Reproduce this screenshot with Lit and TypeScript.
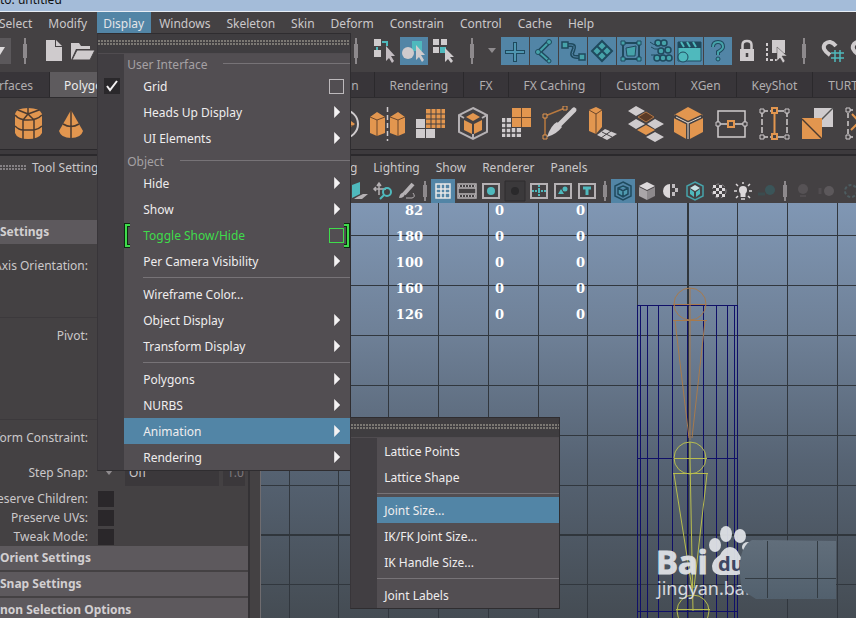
import { LitElement, html, svg, css, nothing } from "lit";
import { customElement, property } from "lit/decorators.js";
import { classMap } from "lit/directives/class-map.js";

const O = "#e2964f";
const L = "#cfcbcd";
const T = "#4fb9bd";
const M = "#46a3aa";
const D = "#1f4a5e";

const icon = (w: number, h: number, body: unknown) =>
  html`<svg width=${w} height=${h} viewBox="0 0 ${w} ${h}" fill="none" aria-hidden="true">${body}</svg>`;

/* ---------- shelf glyphs, 36 x 36 ---------- */
const shelf: Record<string, unknown> = {
  cylinder: svg`<path d="M4 8Q5 2 17 2T31 8V27Q28 33 17 33T4 27Z" fill=${O}/>
    <path d="M4 9Q8 14 17 14T31 9M4 20Q8 24 12 24H23Q28 23 31 20M12 14V33M23 14V33M17 8L7 4M17 8L28 4M17 8L12 14M17 8L23 14M17 8V2" stroke="#4a3a30" stroke-width="1.5"/>`,
  cone: svg`<path d="M17 4L29 25Q27 32 17 32T5 25Z" fill=${O}/><path d="M17 4V32M9 18Q17 23 25 18" stroke="#4a3a30" stroke-width="1.5"/>`,
  sphere: svg`<circle cx="17" cy="18" r="14" stroke=${L} stroke-width="2"/><path d="M8 20L20 12L28 18L18 26Z" fill=${O}/><path d="M10 20H26" stroke="#4a3a30"/>`,
  mirror: svg`<path d="M0 11L7 6L15 11V27L7 30L0 27ZM20 11L28 6L35 11V27L28 30L20 27Z" fill=${O}/>
    <path d="M0 11L7 14L15 11M7 14V30M20 11L28 14L35 11M28 14V30" stroke="#6a472c"/><path d="M17.5 1V35" stroke=${L} stroke-width="1.5" stroke-dasharray="5 3"/>`,
  smooth: svg`<path d="M13 3H32V22H13Z" fill=${O}/><path d="M18 3V22M23 3V22M28 3V22M13 8H32M13 13H32M13 18H32" stroke="#444143" stroke-width="1"/>
    <path d="M3 13H12V22H3ZM3 23H12V32H3ZM13 23H22V32H13Z" fill=${L}/>`,
  hex: svg`<path d="M17 2L31 9V26L17 33L3 26V9ZM3 9L8 12M31 9L26 12M17 28V33" stroke="#b5b1b4" stroke-width="2"/>
    <path d="M17 7L24 11L17 15L10 11ZM8 14L16 18V28L8 24ZM26 14L18 18V28L26 24Z" fill=${O}/>`,
  reduce: svg`<path d="M13 2H32V21H13Z" fill=${O}/><path d="M22.500 2V21M13 11.500H32" stroke="#6a472c"/>
    <path d="M3 12H12V22H22V31H3Z" fill=${L}/><path d="M7 12V31M12 22V31M17 22V31M3 17H12M3 22H12M3 27H22" stroke="#444143" stroke-width="1.500"/>`,
  pen: svg`<path d="M3 31V10L23 2" stroke="#b9793f" stroke-width="1.500"/><path d="M1 8H5V12H1ZM21 0H25V4H21ZM1 29H5V33H1Z" fill="#444143" stroke=${O}/>
    <path d="M5 31Q9 19 15 16L20 21Q15 28 5 31Z" fill=${L}/><path d="M18 18L32 4" stroke=${L} stroke-width="5" stroke-linecap="round"/>`,
  extrude: svg`<path d="M4 4L11 1L17 4V21L11 28L4 25Z" fill=${O}/><path d="M4 4L11 8L17 4M11 8V28" stroke="#6a472c"/>
    <path d="M12 29L20 23L32 28L22 34Z" fill=${L}/><path d="M17 26L27 31M16 32L26 25" stroke="#444143"/>`,
  bridge: svg`<path d="M0 5L8 0L17 5L8 10ZM0 18L8 13L17 18L8 23ZM19 18L27 13L36 18L27 23ZM18 31L27 26L36 31L27 36Z" fill=${L}/>
    <path d="M10 11L18 6L26 11L18 16Z" fill="#5b3b26" stroke="#b07443"/><path d="M9 24L18 19L27 24L18 29Z" fill=${O}/>`,
  cube: svg`<path d="M17 1L32 9V26L17 34L3 26V9Z" fill=${O}/><path d="M3 10L17 17L32 10M17 17V34" stroke="#444143" stroke-width="4"/><path d="M5 11L17 17L30 11M17 17V33" stroke="#e8dccf"/>`,
  loop: svg`<path d="M4 5H31V31H4ZM4 18H31" stroke=${L} stroke-width="1.500"/><path d="M2 16H6V20H2ZM29 16H33V20H29Z" fill="#444143" stroke=${L}/><path d="M14 15H20V21H14Z" fill="#444143" stroke=${O} stroke-width="2"/>`,
  lattice: svg`<path d="M5 5H30M5 31H30M5 5V31M30 5V31" stroke=${L} stroke-width="1.500" stroke-dasharray="6 2"/>
    <path d="M3 3H7V7H3ZM28 3H32V7H28ZM3 29H7V33H3ZM28 29H32V33H28Z" fill="#444143" stroke=${L}/><path d="M17.500 5V31" stroke=${O} stroke-width="2"/><path d="M15 2H20V7H15ZM15 28H20V33H15Z" fill="#444143" stroke=${O} stroke-width="2"/>`,
  flip: svg`<path d="M14 2H33V21H14Z" fill=${L}/><path d="M33 2L14 21" stroke="#555" stroke-width="1.500"/><path d="M2 12H22V33H2Z" fill=${O}/><path d="M2 13L22 33" stroke="#4a3a30" stroke-width="1.500"/>`,
  corner: svg`<path d="M5 4H30V31H5Z" stroke=${L} stroke-width="1.500" stroke-dasharray="5 3"/><path d="M3 2H7V6H3ZM3 29H7V33H3Z" fill="#444143" stroke=${L}/><path d="M9 8L30 30M8 24L16 16" stroke=${O} stroke-width="2"/>`,
};

/* ---------- status line glyphs, 28 x 28 ---------- */
const status: Record<string, unknown> = {
  page: svg`<path d="M6 3H15V10H22V24H6Z" fill=${L}/><path d="M16 3L22 9H16Z" fill=${L}/>`,
  folder: svg`<path d="M2 23V6H10L12 9H21V12H7Z" fill=${L}/><path d="M8 13H26L21 23H3Z" fill=${L} stroke="#444143"/>`,
  hierarchy: svg`<path d="M4 2H11V9H4ZM4 13H11V20H4Z" fill=${L}/><path d="M7 10V13M12 5H17V9" stroke=${T} stroke-width="2"/><path d="M16 9V24L19 21L22 26L24 24L21 19H25Z" fill="#c3bcc1"/>`,
  object: svg`<path d="M12 4H22V14H12Z" fill=${T}/><circle cx="8" cy="16" r="6" fill=${L}/><path d="M16 8V23L19 20L22 25L24 23L21 18H25Z" fill=${L}/>`,
  component: svg`<path d="M3 2H9V8H3ZM11 2H17V8H11ZM3 10H9V16H3Z" fill=${L}/><path d="M10 10H16V16H10Z" fill=${T}/><path d="M15 11V25L18 22L21 26L23 24L20 20H24Z" fill=${L}/>`,
  plus: svg`<path d="M14 5V25M4 15H24" stroke=${D} stroke-width="4"/><path d="M14 6V24M5 15H23" stroke="#4f96b0" stroke-width="2"/>`,
  joint: svg`<path d="M18 6L9 15L18 23" stroke=${D} stroke-width="5"/><path d="M18 6L9 15L18 23" stroke=${M} stroke-width="2"/><circle cx="19" cy="5" r="2.500" fill=${M} stroke=${D}/><circle cx="8" cy="15" r="2.500" fill=${M} stroke=${D}/><circle cx="19" cy="24" r="2" fill=${M} stroke=${D}/>`,
  curve: svg`<path d="M8 8H12Q17 8 14 14T18 20H22" stroke=${D} stroke-width="4"/><path d="M8 8H12Q17 8 14 14T18 20H22" stroke="#5285a6" stroke-width="1"/><path d="M3 5H9V11H3ZM20 17H26V23H20Z" fill=${M} stroke=${D} stroke-width="1.500"/>`,
  surface: svg`<path d="M14 4L24 14L14 24L4 14ZM9 9L19 19M19 9L9 19" fill=${M} stroke=${D} stroke-width="2"/>`,
  deform: svg`<path d="M6 6H22V22H6Z" stroke=${D} stroke-width="2"/><path d="M9 11L19 9L18 19H10Z" fill=${M} stroke=${D}/><path d="M4 4H8V8H4ZM20 4H24V8H20ZM4 20H8V24H4ZM20 20H24V24H20Z" fill=${M} stroke=${D}/>`,
  dynamics: svg`${[[12,6],[18,6],[22,13],[15,14],[17,21],[11,21],[23,21]].map(([x, y]) => svg`<circle cx=${x} cy=${y} r="3" fill=${M} stroke=${D} stroke-width="1.500"/>`)}<path d="M4 5Q7 8 11 8M5 10Q9 13 12 12M5 18H9" stroke=${D}/>`,
  render: svg`<path d="M3 5H26V24H3Z" fill=${T} stroke=${D}/><path d="M3 5H26V11H3Z" fill=${D}/><path d="M6 5L9 10M12 5L15 10M18 5L21 10" stroke=${T} stroke-width="2"/><circle cx="8" cy="20" r="5" fill=${T} stroke=${D}/>`,
  help: svg`<path d="M9 10Q9 5 14 5T19 10Q19 12 14 15V18" stroke=${D} stroke-width="4"/><path d="M9 10Q9 5 14 5T19 10Q19 12 14 15V18" stroke=${M} stroke-width="2"/><circle cx="14" cy="22" r="2" fill=${M} stroke=${D}/>`,
  lock: svg`<path d="M7 12H21V24H7Z" fill=${L}/><path d="M9.500 12V8Q9.500 4 14 4T18.500 8V12" stroke=${L} stroke-width="2.500"/><path d="M14 16V20" stroke="#444143" stroke-width="2.500"/>`,
  marquee: svg`<path d="M4 6V23H14" stroke=${L} stroke-width="2" stroke-dasharray="3 2"/><path d="M9 3H22V16H9Z" fill=${L}/><path d="M14 10V24L17 21L20 26L22 24L19 19H24Z" fill=${L} stroke="#444143" stroke-width=".5"/>`,
  magnet: svg`<path d="M11 18Q2 12 6 7Q11 2 17 9" stroke=${L} stroke-width="4"/><path d="M16 13V25M21 13V25M12 16H25M12 21H25" stroke=${T} stroke-width="1.500"/>`,
};

/* ---------- viewport glyphs, 22 x 22 ---------- */
const P = "#b5b1b4";
const view: Record<string, unknown> = {
  plane: svg`<path d="M4 5L12 2V14L4 18Z" fill=${T}/><path d="M9 17L15 14H20L14 19H6Z" fill=${P}/>`,
  move: svg`<path d="M7 4V15M2 9H14M5 6L7 3L9 6M4 7L2 9L4 11" stroke=${P} stroke-width="1.500"/><circle cx="15" cy="12" r="4" stroke=${T} stroke-width="2"/><path d="M12 15L8 19" stroke=${T} stroke-width="2"/>`,
  brush: svg`<path d="M8 14L17 4" stroke=${P} stroke-width="4"/><path d="M3 18Q4 12 9 13Q9 18 3 18Z" fill=${P}/><path d="M10 18H16Q20 17 17 13" stroke=${P}/>`,
  grid: svg`<path d="M4 4H18V18H4ZM9 4V18M13 4V18M4 9H18M4 13H18" stroke="#e8e8e8" stroke-width="1.500"/>`,
  film: svg`<path d="M2 4H20V18H2ZM2 8H20M2 14H20" stroke=${P} stroke-width="1.500"/><path d="M3 6H20M3 16H20" stroke=${P} stroke-width="2" stroke-dasharray="1 2"/>`,
  gate: svg`<path d="M3 4H19V18H3Z" stroke=${P} stroke-width="2"/><circle cx="11" cy="11" r="4" fill=${T}/>`,
  off: svg`<path d="M1 1H21V21H1Z" fill="#3b393b" stroke="#2f2d2f"/><circle cx="11" cy="11" r="4" fill="#2a292b"/>`,
  cross: svg`<path d="M3 4H19V18H3Z" stroke=${P} stroke-width="2"/><path d="M11 5V17M4 11H18" stroke=${T} stroke-width="2" stroke-dasharray="2 1"/>`,
  safe: svg`<path d="M3 4H19V18H3Z" stroke=${P} stroke-width="2"/><circle cx="13" cy="9" r="2.500" fill=${T}/><path d="M6 14L9 9L12 14Z" fill=${T}/>`,
  title: svg`<path d="M3 4H19V18H3Z" stroke=${P} stroke-width="2"/><path d="M7 8H15M11 8V15" stroke=${T} stroke-width="3"/>`,
  wire: svg`<path d="M11 2L19 6V16L11 20L3 16V6Z" stroke=${D} stroke-width="1.500"/><path d="M11 6L16 8V14L11 17L6 14V8ZM6 8L11 11L16 8M11 11V17" fill="#4f9ab0" stroke=${D} stroke-width="1.500"/>`,
  shaded: svg`<path d="M11 2L19 6L11 10L3 6Z" fill="#dcd8da"/><path d="M3 7L11 11V20L3 16Z" fill="#aaa6a9"/><path d="M19 7L11 11V20L19 16Z" fill="#8d898c"/>`,
  half: svg`<path d="M10 4V18A7 7 0 0 1 10 4" fill="#dcd8da"/><path d="M12 4H15V8H12ZM15 8H18V12H15ZM12 12H15V16H12Z" fill="#c0bcbf"/>`,
  textured: svg`<path d="M11 2L19 6V16L11 20L3 16V6Z" stroke=${M} stroke-width="1.500"/><path d="M11 5L16 8L11 11L6 8Z" fill="#c8e4e6"/><path d="M6 9L10 12V17L6 14ZM16 9L12 12V17L16 14Z" fill=${T}/>`,
  checker: svg`<circle cx="11" cy="11" r="7" stroke="#8b878a" stroke-dasharray="3 3"/><path d="M5 5H8V8H5ZM11 5H14V8H11ZM8 8H11V11H8ZM14 8H17V11H14ZM5 11H8V14H5ZM11 11H14V14H11ZM8 14H11V17H8ZM14 14H17V17H14Z" fill="#dcd8da"/>`,
  light: svg`<circle cx="11" cy="10" r="4" fill="#dcd8da"/><path d="M11 13V17" stroke="#dcd8da" stroke-width="5"/><path d="M11 2V4M2 11H5M17 11H20M4 4L6 6M18 4L16 6M4 18L6 16M18 18L16 16M9 19H13" stroke="#dcd8da" stroke-width="1.500"/>`,
  shadow: svg`<circle cx="14" cy="10" r="5" fill="#3b5559"/><path d="M2 14H9" stroke="#3b4c4f" stroke-width="3"/>`,
  dim: svg`<circle cx="11" cy="9" r="5" fill="#565255"/><path d="M8 16H14" stroke="#504c4f" stroke-width="2"/>`,
  blur: svg`<circle cx="13" cy="11" r="5" fill="#5c585b"/><path d="M4 8V14" stroke="#514d50" stroke-width="3"/>`,
  ring: svg`<circle cx="11" cy="11" r="6" stroke="#4d5c60" stroke-width="2" stroke-dasharray="3 2"/>`,
};

interface Entry {
  label?: string;
  kind?: "head" | "line";
  arrow?: boolean;
  box?: boolean;
  checked?: boolean;
  recent?: boolean;
  active?: boolean;
  sub?: Entry[];
}

const animation: Entry[] = [
  { label: "Lattice Points" },
  { label: "Lattice Shape" },
  { kind: "line" },
  { label: "Joint Size...", active: true },
  { label: "IK/FK Joint Size..." },
  { label: "IK Handle Size..." },
  { kind: "line" },
  { label: "Joint Labels" },
];

const display: Entry[] = [
  { kind: "head", label: "User Interface" },
  { label: "Grid", box: true, checked: true },
  { label: "Heads Up Display", arrow: true },
  { label: "UI Elements", arrow: true },
  { kind: "head", label: "Object" },
  { label: "Hide", arrow: true },
  { label: "Show", arrow: true },
  { label: "Toggle Show/Hide", box: true, recent: true },
  { label: "Per Camera Visibility", arrow: true },
  { kind: "line" },
  { label: "Wireframe Color..." },
  { label: "Object Display", arrow: true },
  { label: "Transform Display", arrow: true },
  { kind: "line" },
  { label: "Polygons", arrow: true },
  { label: "NURBS", arrow: true },
  { label: "Animation", arrow: true, active: true, sub: animation },
  { label: "Rendering", arrow: true },
];

const reset = css`
  * { box-sizing: border-box; }
  button, input, select {
    font: inherit;
    color: inherit;
    background: none;
    border: 0;
    padding: 0;
    margin: 0;
    appearance: none;
    border-radius: 0;
  }
  ul { list-style: none; margin: 0; padding: 0; }
  svg { display: block; flex: none; }
`;

@customElement("drop-menu")
export class DropMenu extends LitElement {
  @property({ attribute: false }) entries: Entry[] = [];
  @property({ type: Boolean, reflect: true }) nested = false;

  static styles = [reset, css`
    :host { display: block; font-size: 12px; line-height: 18px; color: #efedee; white-space: nowrap; }
    .menu {
      border: 1px solid #2f2d30;
      border-left-color: #383539;
      background: linear-gradient(90deg, #413e42 26px, #524e52 26px);
    }
    .tear {
      height: 20px;
      padding-top: 6px;
      background: #3f3d40;
      border-bottom: 1px solid #504c50;
    }
    .dots { height: 6px; background: radial-gradient(circle at 1px 1px, #7b7873 1px, transparent 1px) 0 0 / 3px 3px; }
    .row { position: relative; display: grid; grid-template-columns: 26px 1fr; height: 26px; }
    .body { display: flex; align-items: center; padding: 0 9px 0 19px; }
    .active { background: #5285a6; }
    .item { flex: 1; text-align: left; padding-top: 2px; height: 26px; }
    .tick { width: 16px; height: 16px; margin: 5px 0 0 6px; background: #2a282b; display: grid; place-items: center; }
    .arrow { width: 6px; height: 12px; margin-right: 1px; background: #f4f2f3; clip-path: polygon(0 0, 100% 50%, 0 100%); }
    .box { width: 15px; height: 15px; border: 1px solid #bdb9bc; margin-right: -3px; margin-top: 1px; }
    .recent { color: #3fdc4b; }
    .recent .box { border-color: #3fdc4b; }
    .bracket { position: absolute; top: 1px; bottom: 0; width: 7px; }
    .open { left: 26px; }
    .close { right: 0; }
    .head { display: flex; align-items: center; height: 19px; padding-left: 29px; color: #a5a1a4; }
    .head span { padding-top: 2px; }
    .head::after { content: ""; flex: 1; margin-left: 16px; border-top: 1px solid #777377; }
    .line { height: 7px; padding: 3px 0 0 45px; }
    .line::after { content: ""; display: block; border-top: 1px solid #777377; }
    .hold { position: absolute; left: 100%; top: -1px; width: 210px; z-index: 3; }
    :host([nested]) .body { padding-left: 7px; }
    :host([nested]) .line { padding-left: 26px; }
  `];

  private bracket(open: boolean) {
    const d = open ? "M6 2H2V23H6" : "M1 2H5V23H1";
    return html`<svg class="bracket ${open ? "open" : "close"}" width="7" height="25" fill="none" aria-hidden="true">
      <path d=${d} stroke="#0c2b10" stroke-width="4"></path><path d=${d} stroke="#3fdc4b" stroke-width="2"></path></svg>`;
  }

  private entry(e: Entry) {
    if (e.kind === "line") return html`<li class="line" role="separator"></li>`;
    if (e.kind === "head") return html`<li class="head"><span>${e.label}</span></li>`;
    return html`<li class=${classMap({ row: true, recent: !!e.recent })}>
      <span>${e.checked
        ? html`<span class="tick">${icon(12, 12, svg`<path d="M1 6L4 10L11 1" stroke="#f4f2f3" stroke-width="2"/>`)}</span>`
        : nothing}</span>
      <div class=${classMap({ body: true, active: !!e.active })}>
        <button class="item" role="menuitem">${e.label}</button>
        ${e.arrow ? html`<span class="arrow"></span>` : nothing}
        ${e.box ? html`<button class="box" aria-label="${e.label} options"></button>` : nothing}
      </div>
      ${e.recent ? [this.bracket(true), this.bracket(false)] : nothing}
      ${e.sub ? html`<drop-menu class="hold" nested .entries=${e.sub}></drop-menu>` : nothing}
    </li>`;
  }

  render() {
    return html`<div class="menu">
      <div class="tear"><div class="dots"></div></div>
      <ul role="menu">${this.entries.map((e) => this.entry(e))}</ul>
    </div>`;
  }
}

const BLUE = "#101068";
const columns = [289, 338, 388, 438, 488, 538, 587, 637, 737, 787, 837];
const rows = [235, 285, 335, 385, 435, 485, 584];
const staves = [637, 640, 647, 658, 672, 687, 703, 716, 727, 734, 737];

@customElement("scene-view")
export class SceneView extends LitElement {
  static styles = [reset, css`
    :host {
      display: block;
      position: relative;
      overflow: hidden;
      background: linear-gradient(#8097b4, #6f8198 30%, #566373 62%, #444b52 100%);
    }
    .scene { position: absolute; inset: 0; width: 100%; height: 100%; }
    .hud {
      position: absolute;
      top: -5px;
      left: 126px;
      border-collapse: collapse;
      font: bold 13px/26px "DejaVu Serif", serif;
      color: #fff;
    }
    .hud td { padding: 0; height: 26px; text-align: right; width: 81px; }
    .hud td:first-child { width: 36px; }
    .mark { font-family: "Noto Sans", sans-serif; fill: #e3e6ea; }
    .big { font-size: 33px; font-weight: 700; stroke: #e3e6ea; stroke-width: 1px; }
    .small { font-size: 18px; fill: url(#fade); }
    .du { font-size: 20px; font-weight: 700; fill: #3f4764; }
  `];

  render() {
    return html`
      <svg class="scene" fill="none" aria-label="Perspective view">
        <defs>
          <linearGradient id="patch" x1="0" y1="0" x2="0" y2="1"><stop offset="0" stop-color="#616e7b"/><stop offset="1" stop-color="#52606d"/></linearGradient>
          <linearGradient id="fade" gradientUnits="userSpaceOnUse" x1="657" y1="0" x2="757" y2="0"><stop offset=".85" stop-color="#e3e6ea"/><stop offset="1" stop-color="#e3e6ea" stop-opacity="0"/></linearGradient>
        </defs>
        <g transform="translate(-261 -203)">
          <g stroke="#31373e" shape-rendering="crispEdges">
            ${columns.map((x) => svg`<path d="M${x + 0.5} 203V1600"/>`)}
            ${rows.map((y) => svg`<path d="M261 ${y + 0.5}H2600"/>`)}
            <path d="M261 535H2600M688 203V1600" stroke="#30363c" stroke-width="2"/>
          </g>
          <g stroke=${BLUE} shape-rendering="crispEdges">
            ${staves.map((x) => svg`<path d="M${x + 0.5} 305V1600"/>`)}
            <path d="M637 305.500H738M637 458.500H738M637 611.500H738"/>
          </g>
          <g stroke="#a87a4c">
            <circle cx="690" cy="304" r="16"/>
            <path d="M690 288V440M673 320.500H707M675 321L689 438M705 321L692 438M673 304.500H706"/>
          </g>
          <g stroke="#b9bd4e">
            <circle cx="690" cy="458" r="16"/>
            <path d="M674 458.500H707M690 442V458L693 611M673 473.500H708M674 474L692 588M707 474L694 588M676 609.500H710"/>
            <circle cx="693" cy="611" r="16"/>
          </g>
          <g class="mark" opacity=".92">
            <text class="big" x="656" y="574">Bai</text>
            <ellipse cx="715" cy="545" rx="6" ry="7"/><ellipse cx="726" cy="534" rx="6" ry="8"/>
            <ellipse cx="740" cy="536" rx="6" ry="7"/><ellipse cx="748" cy="547" rx="6" ry="5"/>
            <path d="M730 547Q736 547 739 554L745 564Q746 574 737 575H720Q712 574 712 566Q713 559 720 555Q724 547 730 547Z"/>
            <text class="du" x="718" y="571">du</text>
            <text class="small" x="657" y="595">jingyan.bai</text>
          </g>
          <path d="M752 540L836 541V599H756L742 590Q738 570 741 556Q744 544 752 540Z" fill="url(#patch)"/>
          <path d="M767.500 541V598M817.500 541V598M745 578.500H836" stroke="#333b42"/>
        </g>
      </svg>
      <table class="hud">
        ${["82", "180", "100", "160", "126"].map((n) => html`<tr><td>${n}</td><td>0</td><td>0</td></tr>`)}
      </table>`;
  }
}

@customElement("app-root")
export class AppRoot extends LitElement {
  static styles = [reset, css`
    :host {
      display: flex;
      flex-direction: column;
      min-height: 100vh;
      overflow: hidden;
      background: #444143;
      color: #cbc8ca;
      font: 12px/18px "Noto Sans", "Open Sans", sans-serif;
      white-space: nowrap;
    }
    .title { display: flex; align-items: flex-end; height: 12px; overflow: hidden; background: #a4bcd9; border-bottom: 1px solid #e8eef5; color: #111; font-size: 12px; line-height: 18px; padding-bottom: 2px; }
    .menus { position: relative; z-index: 5; display: flex; height: 22px; align-items: stretch; }
    .menus > .first { margin-left: -9px; }
    .top { padding: 2px 8px 0 8px; display: block; height: 22px; }
    .slot { position: relative; margin-left: 2px; }
    .slot .top { background: #5285a6; color: #e4e4e8; padding-left: 6px; width: 54px; }
    .drop { position: absolute; top: 100%; left: 0; width: 254px; margin-top: -1px; }
    .status { display: flex; align-items: center; height: 38px; padding-bottom: 5px; overflow: hidden; }
    .status button { width: 28px; height: 28px; flex: none; }
    .status .mode { width: 11px; height: 26px; background: #5b585b; display: grid; place-items: center; }
    .bar { flex: none; position: relative; width: 4px; height: 26px; background: linear-gradient(90deg, transparent 1px, #8d898c 1px, #8d898c 3px, transparent 3px); }
    .bar::after { content: ""; position: absolute; left: 0; top: 6px; width: 4px; height: 14px; background: #8d898c; }
    .on { background: #5285a6; }
    .mask { display: flex; gap: 1px; flex: none; }
    .caret { flex: none; width: 8px; height: 5px; background: #8f8b8e; clip-path: polygon(0 0, 100% 0, 50% 100%); }
    .space { flex: none; }
    .tabs { display: flex; height: 26px; background: #383539; border-bottom: 1px solid #2e2c2f; overflow: hidden; }
    .tabs button { flex: none; padding: 2px 15px 0; border-right: 1px solid #2b292c; color: #b1aeb0; }
    .tabs .cut { margin-left: -30px; padding-right: 16px; }
    .tabs .live { background: #5e5b5e; color: #ecebec; padding: 2px 11px 0 14px; }
    .shelf { display: flex; align-items: center; height: 51px; padding-left: 7px; overflow: hidden; }
    .shelf button { flex: none; width: 43px; height: 36px; display: grid; place-items: center; }
    .shelf .gap { margin-left: 15px; }
    .seam { height: 7px; border-top: 1px solid #2b292c; border-bottom: 2px solid #2b292c; background: #3d3a3d; }
    .main { flex: 1; display: flex; min-height: 0; }
    .side { width: 250px; flex: none; display: flex; flex-direction: column; border-right: 2px solid #343235; overflow: hidden; }
    .tool { display: flex; align-items: center; gap: 6px; height: 64px; padding: 0 0 40px; }
    .grip { width: 26px; height: 6px; background: radial-gradient(circle at 1px 1px, #858184 1px, transparent 1px) 0 0 / 3px 3px; }
    .band { flex: none; height: 24px; width: 100%; text-align: left; font-weight: 700; background: #5d595d; color: #d2cfd1; margin-bottom: 2px; }
    .field { display: grid; grid-template-columns: 88px 1fr; gap: 9px; align-items: center; height: 19px; flex: none; }
    .field > label { display: flex; justify-content: flex-end; }
    .field input[type="checkbox"] { width: 16px; height: 16px; background: #2a272a; margin-left: 1px; }
    .axis { height: 39px; }
    .pivot { height: 86px; border-top: 1px solid #3c393c; margin-top: 32px; padding-bottom: 50px; }
    .form { height: 37px; border-top: 1px solid #3c393c; margin-top: 16px; }
    .snap { height: 33px; }
    .pair { display: grid; grid-template-columns: 24px 94px 22px; gap: 4px; align-items: center; }
    .pair .caret { margin-left: 8px; }
    .pair input { height: 26px; width: 100%; background: #3b383b; padding-left: 4px; }
    .pair .low { color: #7d797c; }
    .panel { flex: 1; min-width: 0; margin-left: 10px; border-left: 1px solid #6f6c6f; display: flex; flex-direction: column; }
    .pm { display: flex; height: 22px; }
    .pm button { padding: 2px 8px 0 8px; }
    .pt { display: flex; align-items: center; height: 25px; overflow: hidden; }
    .pt button { width: 24px; height: 24px; flex: none; display: grid; place-items: center; }
    .pt .bar { margin: 0 4px; height: 20px; }
    .pt .bar::after { top: 4px; height: 12px; }
    scene-view { flex: 1; }
    .fill { width: 86px; flex: none; }
  `];

  private top(t: string, first = false) {
    return html`<button class=${classMap({ top: true, first })}>${t}</button>`;
  }

  private st(name: string, on = false) {
    return html`<button class=${classMap({ on })} aria-label=${name}>${icon(28, 28, status[name])}</button>`;
  }

  private vt(name: string, on = false) {
    return html`<button class=${classMap({ on })} aria-label=${name}>${icon(22, 22, view[name])}</button>`;
  }

  private space(w: number) {
    return html`<span class="space" style="width:${w}px"></span>`;
  }

  private sh(name: string, gap = false) {
    return html`<button class=${classMap({ gap })} aria-label=${name}>${icon(36, 36, shelf[name])}</button>`;
  }

  render() {
    const bar = html`<span class="bar"></span>`;
    return html`
      <header class="title">to: untitled</header>
      <nav class="menus">
        ${this.top("Select", true)}${this.top("Modify")}
        <div class="slot">${this.top("Display")}<drop-menu class="drop" .entries=${display}></drop-menu></div>
        ${["Windows", "Skeleton", "Skin", "Deform", "Constrain", "Control", "Cache", "Help"].map((t) => this.top(t))}
      </nav>
      <div class="status">
        <button class="mode" aria-label="Menu set">${icon(11, 8, svg`<path d="M0 0H5L0 8Z" fill="#dedbdd"/>`)}</button>
        ${this.space(12)}${bar}${this.space(13)}${this.st("page")}${this.space(1)}${this.st("folder")}
        ${this.space(257)}${bar}${this.space(12)}${this.st("hierarchy")}${this.space(2)}${this.st("object", true)}${this.space(2)}${this.st("component")}
        ${this.space(12)}${bar}${this.space(14)}<span class="caret"></span>${this.space(5)}
        <div class="mask">${["plus", "joint", "curve", "surface", "deform", "dynamics", "render", "help"].map((n) => this.st(n, true))}</div>
        ${this.space(1)}${this.st("lock")}${this.space(2)}${this.st("marquee")}${this.space(11)}${bar}${this.space(13)}${this.st("magnet")}${this.space(1)}${this.st("magnet")}
      </div>
      <div class="tabs">
        <button class="cut">Surfaces</button><button class="live">Polygons</button>
        ${["Sculpting", "Rigging", "Animation", "Rendering", "FX", "FX Caching", "Custom", "XGen", "KeyShot", "TURTLE"].map((t) => html`<button>${t}</button>`)}
      </div>
      <div class="shelf">
        ${["cylinder", "cone"].map((n) => this.sh(n))}
        ${this.space(215)}${this.sh("sphere", true)}
        ${["mirror", "smooth", "hex", "reduce", "pen", "extrude", "bridge", "cube", "loop", "lattice", "flip", "corner"].map((n) => this.sh(n))}
      </div>
      <div class="seam"></div>
      <div class="main">
        <aside class="side">
          <div class="tool"><span class="grip"></span>Tool Settings</div>
          <button class="band">Settings</button>
          <div class="field axis"><label>Axis Orientation:</label></div>
          <div class="field pivot"><label>Pivot:</label></div>
          <div class="field form"><label>Transform Constraint:</label></div>
          <div class="field snap"><label for="snap">Step Snap:</label>
            <div class="pair"><span class="caret"></span><input id="snap" value="Off"><input class="low" aria-label="Step size" value="1.0"></div></div>
          <div class="field"><label for="pc">Preserve Children:</label><input id="pc" type="checkbox"></div>
          <div class="field"><label for="pu">Preserve UVs:</label><input id="pu" type="checkbox"></div>
          <div class="field"><label for="tm">Tweak Mode:</label><input id="tm" type="checkbox"></div>
          <button class="band">Orient Settings</button>
          <button class="band">Snap Settings</button>
          <button class="band">non Selection Options</button>
        </aside>
        <section class="panel">
          <div class="pm">${["View", "Shading", "Lighting", "Show", "Renderer", "Panels"].map((t) => html`<button>${t}</button>`)}</div>
          <div class="pt">
            <span class="fill"></span>
            ${["plane", "move", "brush"].map((n) => this.vt(n))}${bar}
            ${this.vt("grid", true)}${["film", "gate", "off", "cross", "safe", "title"].map((n) => this.vt(n))}${bar}
            ${this.vt("wire", true)}${["shaded", "half", "textured", "checker", "light", "shadow"].map((n) => this.vt(n))}${bar}
            ${["dim", "blur", "ring"].map((n) => this.vt(n))}
          </div>
          <scene-view></scene-view>
        </section>
      </div>`;
  }
}
